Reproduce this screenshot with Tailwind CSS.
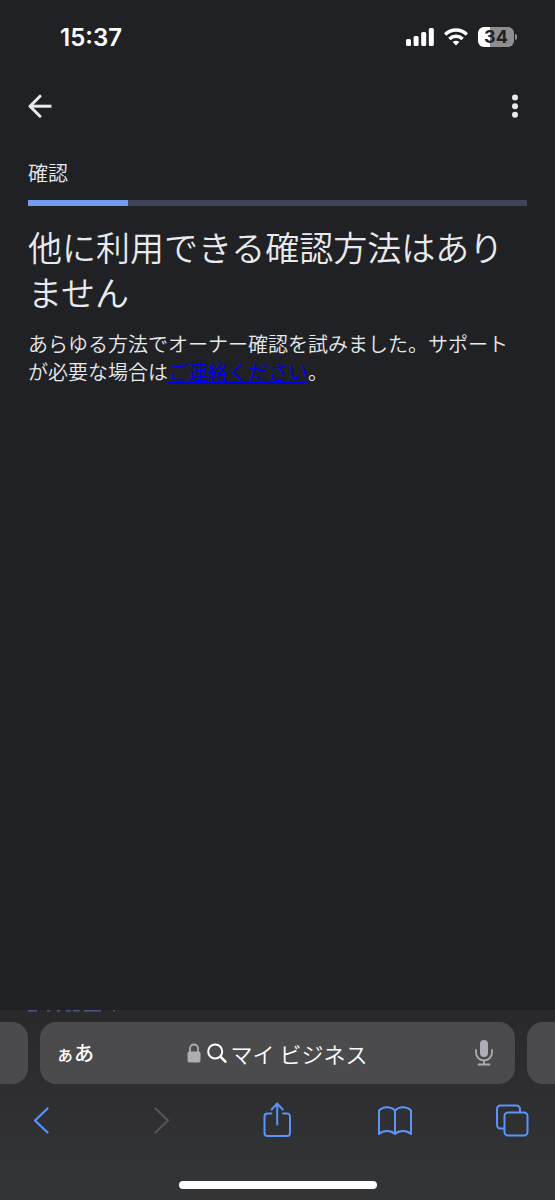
<!DOCTYPE html>
<html lang="ja">
<head>
    <meta charset="UTF-8">
    <meta name="viewport" content="width=device-width, initial-scale=1.0">
    <title>マイ ビジネス</title>
    <script src="https://cdn.jsdelivr.net/npm/@tailwindcss/browser@4"></script>
</head>
<body class="bg-[#202124] text-[#e8eaed] font-['Noto_Sans_CJK_JP',sans-serif] font-[350] flex flex-col min-h-screen overflow-x-hidden">

    <!-- Status bar -->
    <div class="flex items-center justify-between h-[74px] pl-15 pr-[38px] text-white">
      <time class="pt-0.5 font-['Inter',sans-serif] text-2xl font-semibold">15:37</time>
      <div class="flex items-center gap-[10px]">
        <svg class="w-7 h-5" viewBox="0 0 28 20" fill="currentColor" aria-hidden="true">
          <rect x="0" y="12" width="5" height="7" rx="1.5"/>
          <rect x="7.6" y="9" width="5" height="10" rx="1.5"/>
          <rect x="15.2" y="5" width="5" height="14" rx="1.5"/>
          <rect x="22.8" y="1" width="5" height="18" rx="1.5"/>
        </svg>
        <svg class="w-6 h-5" viewBox="0 0 24 20" fill="none" stroke="currentColor" stroke-width="3.4" aria-hidden="true">
          <path d="M1.2 7.4a15.6 15.6 0 0 1 21.6 0"/>
          <path d="M5.4 11.9a9.6 9.6 0 0 1 13.2 0"/>
          <path d="M12 18.6l-3.4-3.5a4.9 4.9 0 0 1 6.8 0z" fill="currentColor" stroke="none"/>
        </svg>
        <div class="flex items-center gap-px">
          <div class="w-9 h-5 rounded-md bg-linear-to-r from-white from-34% to-[#8e8e90] to-34% text-[#202124] font-['Inter',sans-serif] text-lg leading-5 font-bold text-center">34</div>
          <div class="w-[2px] h-[6px] rounded-r-full bg-[#8e8e90]"></div>
        </div>
      </div>
    </div>

    <!-- App header -->
    <header class="flex items-center justify-between h-16 px-7">
      <button aria-label="戻る">
        <svg class="w-6 h-6" viewBox="0 0 24 24" fill="none" stroke="currentColor" stroke-width="3" stroke-linecap="round" stroke-linejoin="round">
          <path d="M12 2.2 2 12.200l10 10"/>
          <path d="M3 12.200h20.500" stroke-linecap="butt"/>
        </svg>
      </button>
      <button aria-label="メニュー">
        <svg class="w-6 h-6" viewBox="0 0 24 24" fill="currentColor">
          <circle cx="12" cy="3.6" r="3"/>
          <circle cx="12" cy="12.200" r="3"/>
          <circle cx="12" cy="20.8" r="3"/>
        </svg>
      </button>
    </header>

    <main class="flex-1 px-7 pt-[21px]">
      <p id="step" class="text-xl leading-7">確認</p>
      <div role="progressbar" aria-labelledby="step" aria-valuenow="20" class="mt-[13px] h-[6px] bg-[#3c4458]">
        <div class="h-full bg-[#749bf0]" style="width: 20%"></div>
      </div>
      <h1 class="mt-[18px] text-[34px] leading-[45px]">他に利用できる確認方法はありません</h1>
      <p class="mt-4 text-xl leading-7">あらゆる方法でオーナー確認を試みました。サポートが必要な場合は<a href="#" class="text-[#0000ee] underline underline-offset-2">ご連絡ください</a>。</p>
    </main>

    <!-- Browser toolbar -->
    <footer class="h-[190px] flex flex-col bg-linear-to-b from-[#29292b] to-[#343536]">
      <svg class="ml-7 w-24 h-3 shrink-0" viewBox="0 0 96 12" stroke="#4c567c" aria-hidden="true">
        <path d="M0 .8h9M19 .8h3M29 .8h3M38 .8h5M45 .8h7M56 .8h17M85 .8h2" stroke-width="1.4"/>
      </svg>
      <div class="flex gap-3 h-[62px] shrink-0">
        <div class="w-7 rounded-r-2xl bg-[#4b4b4d]"></div>
        <div class="flex-1 flex items-center justify-between rounded-2xl bg-[#4b4b4d] text-white pl-4 pr-5">
          <button aria-label="ページ設定" class="flex items-baseline w-[38px] leading-7 font-medium"><span class="text-lg">ぁ</span><span class="text-xl">あ</span></button>
          <div class="flex items-center">
            <svg class="w-[14px] h-5 text-[#aeadb5]" viewBox="0 0 14 20" fill="none" stroke="currentColor" aria-hidden="true">
              <path d="M3 9V5.500a4 4 0 0 1 8 0V9" stroke-width="1.8"/>
              <rect x=".5" y="8.500" width="13" height="11" rx="2" fill="currentColor" stroke="none"/>
            </svg>
            <svg class="ml-[6px] w-5 h-5" viewBox="0 0 20 20" fill="none" stroke="currentColor" stroke-linecap="round" aria-hidden="true">
              <circle cx="8.200" cy="8.500" r="7" stroke-width="2"/>
              <path d="M13.400 13.700l5 5" stroke-width="2.600"/>
            </svg>
            <input type="text" aria-label="検索" value="マイ ビジネス" class="ml-1 w-[150px] text-[22px] leading-8 outline-none">
          </div>
          <button aria-label="音声入力">
            <svg class="w-[22px] h-7 text-[#aeadb5]" viewBox="0 0 22 28" fill="none" stroke="currentColor" stroke-width="1.800" stroke-linecap="round">
              <rect x="7" y="1" width="8" height="17" rx="4" fill="currentColor" stroke="none"/>
              <path d="M3 11v2.500a8 8 0 0 0 16 0V11M11 21.500V25M5.500 25.500h11"/>
            </svg>
          </button>
        </div>
        <div class="w-7 rounded-l-2xl bg-[#4b4b4d]"></div>
      </div>
      <nav class="flex items-center justify-between h-[72px] pl-6 pr-[25px] text-[#5b93fb]">
        <button aria-label="前のページ">
          <svg class="w-9 h-9" viewBox="0 0 36 36" fill="none" stroke="currentColor" stroke-width="2.200" stroke-linecap="round" stroke-linejoin="round"><path d="M23.500 6.500 11 18.500l12.500 12"/></svg>
        </button>
        <button aria-label="次のページ" disabled class="text-[#555557]">
          <svg class="w-9 h-9" viewBox="0 0 36 36" fill="none" stroke="currentColor" stroke-width="2.200" stroke-linecap="round" stroke-linejoin="round"><path d="M13.500 6.500 26 18.500l-12.500 12"/></svg>
        </button>
        <button aria-label="共有">
          <svg class="w-9 h-9" viewBox="0 0 36 36" fill="none" stroke="currentColor" stroke-width="2" stroke-linecap="round" stroke-linejoin="round">
            <path d="M12.500 11.500H8.500a3 3 0 0 0-3 3V31a3 3 0 0 0 3 3h19.500a3 3 0 0 0 3-3V14.500a3 3 0 0 0-3-3h-4"/>
            <path d="M18.200 22.500V1.500M12.700 7.500l5.500-6 5.500 6"/>
          </svg>
        </button>
        <button aria-label="ブックマーク">
          <svg class="w-9 h-9" viewBox="0 0 36 36" fill="none" stroke="currentColor" stroke-width="2" stroke-linecap="round" stroke-linejoin="round">
            <path d="M18 8.500C14 4 6 4 2 8.500v23.500c4-4 12-4 16 0 4-4 12-4 16 0v-23.500C30 4 22 4 18 8.500zM18 8.500v23.500"/>
          </svg>
        </button>
        <button aria-label="タブ">
          <svg class="w-9 h-9" viewBox="0 0 36 36" fill="none" stroke="currentColor" stroke-width="2" stroke-linejoin="round">
            <rect x="10.500" y="10.500" width="23" height="23" rx="3.500"/>
            <path d="M10.500 26.500H6.500a3.500 3.500 0 0 1-3.500-3.500V7A3.500 3.500 0 0 1 6.500 3.500h16A3.500 3.500 0 0 1 26 7v3.500"/>
          </svg>
        </button>
      </nav>
      <div class="mt-auto mb-[11px] self-center w-[198px] h-2 rounded-full bg-white"></div>
    </footer>

</body>
</html>
